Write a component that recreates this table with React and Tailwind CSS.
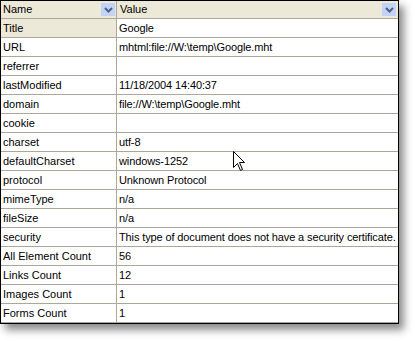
import React from "react";

const rows = [
  ["Title", "Google"],
  ["URL", "mhtml:file://W:\\temp\\Google.mht"],
  ["referrer", ""],
  ["lastModified", "11/18/2004 14:40:37"],
  ["domain", "file://W:\\temp\\Google.mht"],
  ["cookie", ""],
  ["charset", "utf-8"],
  ["defaultCharset", "windows-1252"],
  ["protocol", "Unknown Protocol"],
  ["mimeType", "n/a"],
  ["fileSize", "n/a"],
  ["security", "This type of document does not have a security certificate."],
  ["All Element Count", "56"],
  ["Links Count", "12"],
  ["Images Count", "1"],
  ["Forms Count", "1"],
];

function DropButton() {
  return (
    <span className="flex h-[13px] w-[14px] shrink-0 items-center justify-center bg-[#c3d3f5]">
      <svg width="9" height="6" viewBox="0 0 9 6">
        <path d="M1 1 L4.5 4.5 L8 1" fill="none" stroke="#4d6185" strokeWidth="2" />
      </svg>
    </span>
  );
}

function Cursor() {
  return (
    <svg
      className="absolute left-[232px] top-[150px]"
      width="13"
      height="22"
      viewBox="0 0 13 22"
    >
      <path
        d="M0.5 0.5 L0.5 16.5 L4.5 12.5 L7.5 19.5 L9.5 18.5 L6.5 11.5 L11.5 11.5 Z"
        fill="#fff"
        stroke="#000"
        strokeWidth="1"
        strokeLinejoin="miter"
      />
    </svg>
  );
}

export default function App() {
  return (
    <div className="h-[341px] w-[415px] bg-white">
      <div
        className="relative w-[399px] border border-black bg-white text-[11px] leading-none text-black shadow-[5px_6px_8px_rgba(0,0,0,0.45)]"
        style={{ fontFamily: '"Liberation Sans", Arial, sans-serif' }}
      >
        <div className="flex h-[18px] border-b border-[#aca899] bg-[#ece9d8]">
          <div className="flex w-[116px] shrink-0 items-center justify-between border-r border-[#aca899] pl-[2px] pr-[1px]">
            <span>Name</span>
            <DropButton />
          </div>
          <div className="flex min-w-0 flex-1 items-center justify-between pl-[3px] pr-[2px]">
            <span>Value</span>
            <DropButton />
          </div>
        </div>
        {rows.map(([name, value], i) => (
          <div key={i} className="flex h-[19px] border-b border-[#aca899]">
            <div
              className={`flex w-[116px] shrink-0 items-center border-r border-[#aca899] pl-[2px] ${
                i === 0 ? "bg-[#ece9d8]" : ""
              }`}
            >
              {name}
            </div>
            <div className="flex min-w-0 flex-1 items-center overflow-hidden whitespace-nowrap pl-[2px] tracking-[-0.12px]">
              {value}
            </div>
          </div>
        ))}
        <Cursor />
      </div>
    </div>
  );
}
